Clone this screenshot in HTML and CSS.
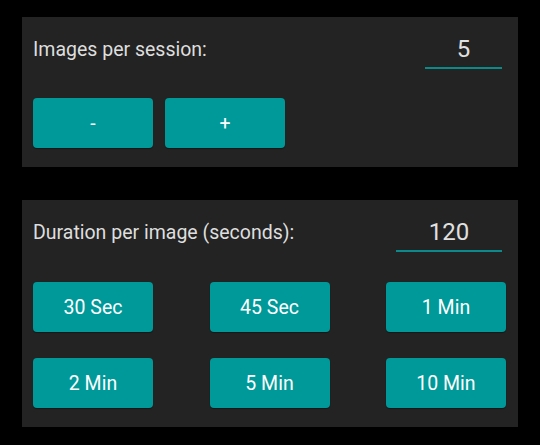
FILE: index.html
```html
<!DOCTYPE html>
<html>
<head>
<meta charset="utf-8">
<link rel="stylesheet" href="styles.css">
</head>
<body>
<div class="page">
  <section class="panel">
    <div class="header">
      <span class="label">Images per session:</span>
      <div class="field field-short">5</div>
    </div>
    <div class="row">
      <button class="btn">-</button>
      <button class="btn">+</button>
    </div>
  </section>
  <section class="panel">
    <div class="header">
      <span class="label">Duration per image (seconds):</span>
      <div class="field field-long">120</div>
    </div>
    <div class="grid">
      <button class="btn">30 Sec</button>
      <button class="btn">45 Sec</button>
      <button class="btn">1 Min</button>
      <button class="btn">2 Min</button>
      <button class="btn">5 Min</button>
      <button class="btn">10 Min</button>
    </div>
  </section>
</div>
</body>
</html>
```

FILE: styles.css
```css
html, body {
  margin: 0;
  padding: 0;
  background: #000;
  width: 540px;
  height: 445px;
  overflow: hidden;
}
.page {
  padding: 17px 22px 0 22px;
  display: flex;
  flex-direction: column;
  gap: 33px;
  font-family: Roboto, "Noto Sans", sans-serif;
}
.panel {
  background: #232323;
  padding: 14px 12px 19px 11px;
}
.header {
  display: flex;
  justify-content: space-between;
  align-items: flex-start;
  margin-right: 4px;
}
.label {
  font-size: 19.5px;
  line-height: 36px;
  padding-top: 1px;
  color: #dedede;
}
.field {
  height: 36px;
  line-height: 36px;
  font-size: 24px;
  color: #e0e0e0;
  text-align: center;
  border-bottom: 2px solid #0c8a8b;
}
.field-short { width: 77px; }
.field-long { width: 106px; }
.row {
  display: flex;
  gap: 12px;
  margin-top: 29px;
}
.grid {
  display: grid;
  grid-template-columns: 120px 120px 120px;
  justify-content: space-between;
  row-gap: 26px;
  margin-top: 30px;
}
.btn {
  width: 120px;
  height: 50px;
  border: none;
  border-radius: 4px;
  background: #009999;
  color: #fff;
  font-family: Roboto, "Noto Sans", sans-serif;
  font-size: 19.5px;
  padding: 0;
  box-shadow: 0 1px 1px rgba(0, 0, 0, 0.35);
}
```
